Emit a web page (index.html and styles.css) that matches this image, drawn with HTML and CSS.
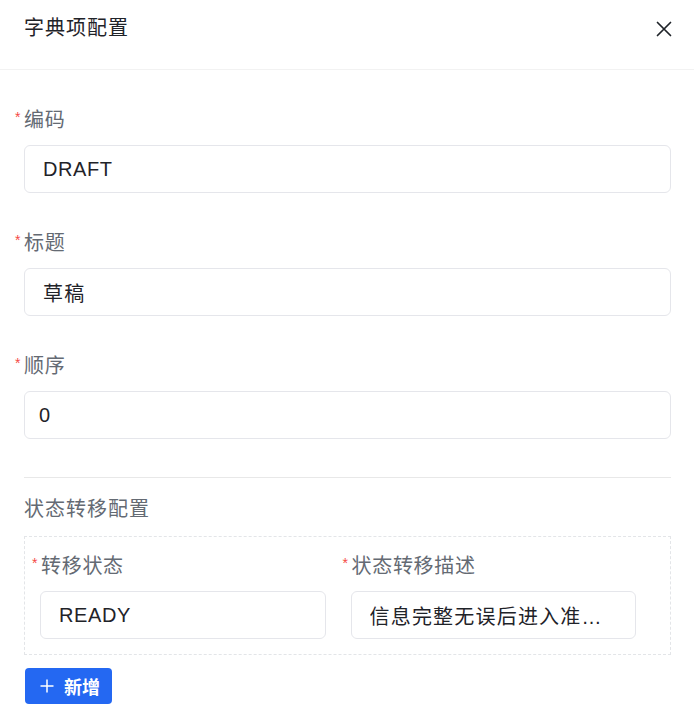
FILE: index.html
```html
<!DOCTYPE html>
<html lang="zh-CN">

<head>
    <meta charset="UTF-8">
    <meta name="viewport" content="width=device-width, initial-scale=1.0">
    <title>字典项配置</title>
    <link rel="stylesheet" href="styles.css">
</head>

<body>
    <div class="drawer">
        <header class="drawer-header">
            <h1>字典项配置</h1>
            <button class="close-btn" type="button" aria-label="关闭">
                <svg width="16" height="16" viewBox="0 0 16 16">
                    <path d="M1.5 1.5 L14.5 14.5 M14.5 1.5 L1.5 14.5" stroke="#1f2329" stroke-width="1.7" stroke-linecap="round" fill="none" />
                </svg>
            </button>
        </header>

        <form class="drawer-body" id="dictForm">
            <div class="form-item">
                <label class="required" for="code">编码</label>
                <input type="text" id="code" value="DRAFT">
            </div>
            <div class="form-item">
                <label class="required" for="title">标题</label>
                <input type="text" id="title" class="cjk" value="草稿">
            </div>
            <div class="form-item">
                <label class="required" for="sort">顺序</label>
                <input type="text" id="sort" class="num" value="0">
            </div>

            <hr class="divider">

            <div class="section-title">状态转移配置</div>

            <div class="transfer-box">
                <div class="transfer-row">
                    <div class="transfer-cell">
                        <label class="required">转移状态</label>
                        <input type="text" value="READY">
                    </div>
                    <div class="transfer-cell">
                        <label class="required">状态转移描述</label>
                        <input type="text" class="cjk" value="信息完整无误后进入准备状态">
                    </div>
                </div>
            </div>

            <button class="add-btn" type="button">
                <svg width="14" height="14" viewBox="0 0 14 14">
                    <path d="M7 0.5 V13.5 M0.5 7 H13.5" stroke="#fff" stroke-width="1.5" fill="none" />
                </svg>
                <span>新增</span>
            </button>
        </form>
    </div>
</body>

</html>
```

FILE: styles.css
```css
body {
    margin: 0;
    padding: 0;
    background: #fff;
    font-family: "Liberation Sans", "Noto Sans CJK SC", sans-serif;
    color: #1f2329;
}

.drawer {
    width: 100%;
}

.drawer-header {
    box-sizing: border-box;
    height: 70px;
    padding: 13px 18px 0 24px;
    border-bottom: 1px solid #f2f2f2;
    display: flex;
    justify-content: space-between;
    align-items: flex-start;
}

.drawer-header h1 {
    margin: 0;
    font-size: 20px;
    font-weight: normal;
    line-height: 30px;
    letter-spacing: 1px;
    color: #1f2329;
}

.close-btn {
    margin-top: 4px;
    padding: 0;
    border: none;
    background: none;
    width: 24px;
    height: 24px;
    display: flex;
    align-items: center;
    justify-content: center;
    cursor: pointer;
}

.drawer-body {
    padding: 35px 23px 0 24px;
}

.form-item {
    margin-bottom: 35px;
}

label {
    display: block;
    position: relative;
    height: 30px;
    line-height: 30px;
    font-size: 20px;
    letter-spacing: 0.7px;
    color: #646a73;
    margin-bottom: 10px;
}

label.required::before {
    content: "*";
    position: absolute;
    left: -9px;
    top: -3px;
    font-size: 14px;
    color: #f54a45;
}

input {
    display: block;
    box-sizing: border-box;
    width: 100%;
    height: 48px;
    padding: 0 18px;
    border: 1px solid #e5e6eb;
    border-radius: 6px;
    font-family: "Liberation Sans", "Noto Sans CJK SC", sans-serif;
    font-size: 20px;
    letter-spacing: 0.6px;
    color: #1f2329;
    background: #fff;
    outline: none;
    text-overflow: ellipsis;
}

input.cjk {
    letter-spacing: 1.2px;
}

input.num {
    padding-left: 14px;
}

.divider {
    margin: 38px 0 16px 0;
    border: none;
    border-top: 1px solid #e8e8e8;
}

.section-title {
    line-height: 30px;
    font-size: 20px;
    letter-spacing: 1px;
    color: #646a73;
    margin-bottom: 12px;
}

.transfer-box {
    border: 1px dashed #e3e5e8;
    padding: 14px 34px 15px 15px;
}

.transfer-row {
    display: grid;
    grid-template-columns: 1fr 1fr;
    gap: 25px;
}

.transfer-cell label {
    margin-left: 1px;
}

.add-btn {
    margin: 13px 0 0 1px;
    height: 36px;
    padding: 0 12px 0 15px;
    display: flex;
    align-items: center;
    gap: 10px;
    border: none;
    border-radius: 4px;
    background: #2468f2;
    color: #fff;
    font-family: "Liberation Sans", "Noto Sans CJK SC", sans-serif;
    font-size: 18px;
    font-weight: bold;
    cursor: pointer;
}
```
